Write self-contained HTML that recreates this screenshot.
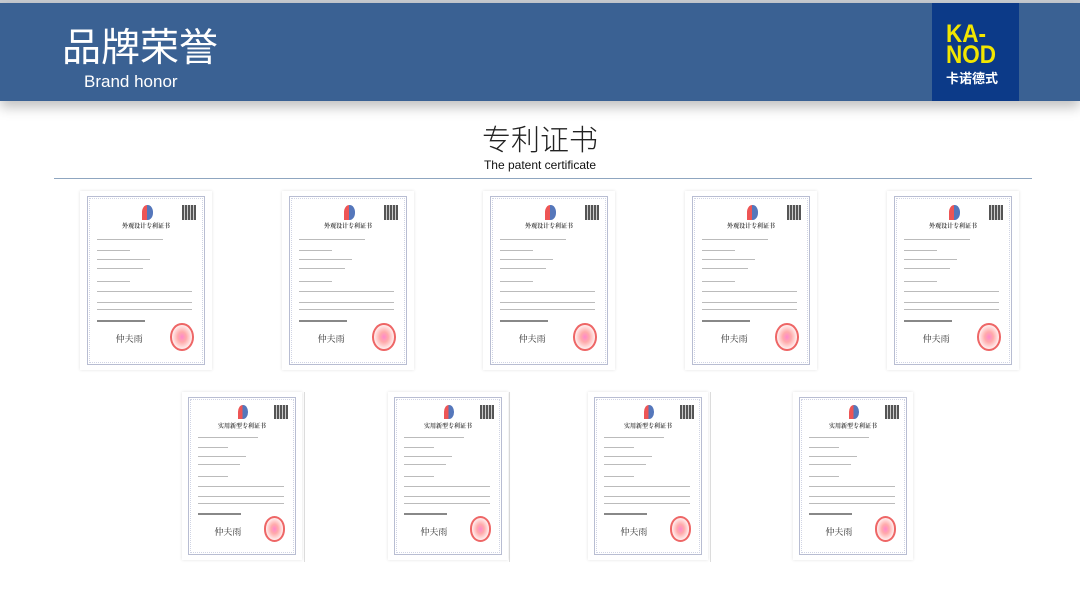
<!DOCTYPE html>
<html><head><meta charset="utf-8">
<style>
*{margin:0;padding:0;box-sizing:border-box}
body{width:1080px;height:608px;background:#fff;position:relative;overflow:hidden;font-family:"Liberation Sans","Noto Sans CJK SC",sans-serif}
.top{position:absolute;left:0;top:0;width:1080px;height:3px;background:#c8ccd2}
.hdr{position:absolute;left:0;top:3px;width:1080px;height:98px;background:#3a6193;box-shadow:0 6px 12px rgba(0,0,0,.25)}
.h1{position:absolute;left:62px;top:22px;color:#fff;font-size:39px;font-family:"Noto Sans CJK SC",sans-serif;letter-spacing:0px;line-height:46px}
.h2{position:absolute;left:84px;top:71px;color:#fff;font-size:17px;line-height:22px}
.logo{position:absolute;left:932px;top:3px;width:87px;height:98px;background:#0c3a88}
.logo .k{position:absolute;left:14px;top:21px;color:#f2e600;font-weight:bold;font-size:25px;line-height:21px;transform:scaleX(.9);transform-origin:left}
.logo .c{position:absolute;left:14px;top:65px;color:#fff;font-size:13px;font-family:"Noto Sans CJK SC",sans-serif;font-weight:bold}
.t1{position:absolute;left:0;width:1080px;top:118px;text-align:center;font-size:29px;font-family:"Noto Sans CJK SC",sans-serif;font-weight:300;color:#222;line-height:40px}
.t2{position:absolute;left:0;width:1080px;top:158px;text-align:center;font-size:12px;color:#111}
.rule{position:absolute;left:54px;top:178px;width:978px;height:1px;background:#8fa6c0}
.cert{position:absolute;background:#fff;box-shadow:0 0 3px rgba(0,0,0,.12)}
.cert .b{position:absolute;left:5%;top:3%;right:5%;bottom:3%;border:1px solid #b8bdd2;outline:1px dotted #d0d4e4;outline-offset:-3px}
.cert .lg{position:absolute;left:47%;top:8%;width:8%;height:8%;border-radius:50% 50% 50% 0;background:linear-gradient(90deg,#e55 0 45%,#57b 45%)}
.cert .qr{position:absolute;right:12%;top:8%;width:11%;height:8%;background:repeating-linear-gradient(90deg,#555 0 2px,#ccc 2px 3px)}
.cert .tt{position:absolute;left:0;right:0;top:17%;text-align:center;font-size:6px;font-family:"Noto Serif CJK SC",serif;color:#444;font-weight:bold}
.cert .ln{position:absolute;left:13%;height:1px;background:#bbb}
.cert .sl{position:absolute;right:14%;top:74%;width:18%;padding-bottom:18%;border-radius:50%;border:2px solid #e66;background:radial-gradient(#f8c 0,#faa 30%,#fee 70%)}
.cert .sg{position:absolute;left:27%;top:79%;font-size:9px;color:#333;font-family:"Noto Serif CJK SC",serif}
.cert .bar{position:absolute;left:13%;top:72%;width:36%;height:2px;background:#888}
.sep{position:absolute;width:1px;background:#ddd}
</style></head><body>
<div class="top"></div>
<div class="hdr"></div>
<div class="h1">品牌荣誉</div>
<div class="h2">Brand honor</div>
<div class="logo"><div class="k">KA-<br>NOD</div><div class="c">卡诺德式</div></div>
<div class="t1">专利证书</div>
<div class="t2">The patent certificate</div>
<div class="rule"></div>

<div class="cert" style="left:80px;top:191px;width:132px;height:179px"><div class="b"></div><div class="lg"></div><div class="qr"></div><div class="tt">外观设计专利证书</div><div class="ln" style="top:27%;width:50%"></div><div class="ln" style="top:33%;width:25%"></div><div class="ln" style="top:38%;width:40%"></div><div class="ln" style="top:43%;width:35%"></div><div class="ln" style="top:50%;width:25%"></div><div class="ln" style="top:56%;width:72%"></div><div class="ln" style="top:62%;width:72%"></div><div class="ln" style="top:66%;width:72%"></div><div class="bar"></div><div class="sg">仲夫雨</div><div class="sl"></div></div>
<div class="cert" style="left:282px;top:191px;width:132px;height:179px"><div class="b"></div><div class="lg"></div><div class="qr"></div><div class="tt">外观设计专利证书</div><div class="ln" style="top:27%;width:50%"></div><div class="ln" style="top:33%;width:25%"></div><div class="ln" style="top:38%;width:40%"></div><div class="ln" style="top:43%;width:35%"></div><div class="ln" style="top:50%;width:25%"></div><div class="ln" style="top:56%;width:72%"></div><div class="ln" style="top:62%;width:72%"></div><div class="ln" style="top:66%;width:72%"></div><div class="bar"></div><div class="sg">仲夫雨</div><div class="sl"></div></div>
<div class="cert" style="left:483px;top:191px;width:132px;height:179px"><div class="b"></div><div class="lg"></div><div class="qr"></div><div class="tt">外观设计专利证书</div><div class="ln" style="top:27%;width:50%"></div><div class="ln" style="top:33%;width:25%"></div><div class="ln" style="top:38%;width:40%"></div><div class="ln" style="top:43%;width:35%"></div><div class="ln" style="top:50%;width:25%"></div><div class="ln" style="top:56%;width:72%"></div><div class="ln" style="top:62%;width:72%"></div><div class="ln" style="top:66%;width:72%"></div><div class="bar"></div><div class="sg">仲夫雨</div><div class="sl"></div></div>
<div class="cert" style="left:685px;top:191px;width:132px;height:179px"><div class="b"></div><div class="lg"></div><div class="qr"></div><div class="tt">外观设计专利证书</div><div class="ln" style="top:27%;width:50%"></div><div class="ln" style="top:33%;width:25%"></div><div class="ln" style="top:38%;width:40%"></div><div class="ln" style="top:43%;width:35%"></div><div class="ln" style="top:50%;width:25%"></div><div class="ln" style="top:56%;width:72%"></div><div class="ln" style="top:62%;width:72%"></div><div class="ln" style="top:66%;width:72%"></div><div class="bar"></div><div class="sg">仲夫雨</div><div class="sl"></div></div>
<div class="cert" style="left:887px;top:191px;width:132px;height:179px"><div class="b"></div><div class="lg"></div><div class="qr"></div><div class="tt">外观设计专利证书</div><div class="ln" style="top:27%;width:50%"></div><div class="ln" style="top:33%;width:25%"></div><div class="ln" style="top:38%;width:40%"></div><div class="ln" style="top:43%;width:35%"></div><div class="ln" style="top:50%;width:25%"></div><div class="ln" style="top:56%;width:72%"></div><div class="ln" style="top:62%;width:72%"></div><div class="ln" style="top:66%;width:72%"></div><div class="bar"></div><div class="sg">仲夫雨</div><div class="sl"></div></div>

<div class="sep" style="left:304px;top:392px;height:170px"></div>
<div class="sep" style="left:509px;top:392px;height:170px"></div>
<div class="sep" style="left:710px;top:392px;height:170px"></div>

<div class="cert" style="left:182px;top:392px;width:120px;height:168px"><div class="b"></div><div class="lg"></div><div class="qr"></div><div class="tt">实用新型专利证书</div><div class="ln" style="top:27%;width:50%"></div><div class="ln" style="top:33%;width:25%"></div><div class="ln" style="top:38%;width:40%"></div><div class="ln" style="top:43%;width:35%"></div><div class="ln" style="top:50%;width:25%"></div><div class="ln" style="top:56%;width:72%"></div><div class="ln" style="top:62%;width:72%"></div><div class="ln" style="top:66%;width:72%"></div><div class="bar"></div><div class="sg">仲夫雨</div><div class="sl"></div></div>
<div class="cert" style="left:388px;top:392px;width:120px;height:168px"><div class="b"></div><div class="lg"></div><div class="qr"></div><div class="tt">实用新型专利证书</div><div class="ln" style="top:27%;width:50%"></div><div class="ln" style="top:33%;width:25%"></div><div class="ln" style="top:38%;width:40%"></div><div class="ln" style="top:43%;width:35%"></div><div class="ln" style="top:50%;width:25%"></div><div class="ln" style="top:56%;width:72%"></div><div class="ln" style="top:62%;width:72%"></div><div class="ln" style="top:66%;width:72%"></div><div class="bar"></div><div class="sg">仲夫雨</div><div class="sl"></div></div>
<div class="cert" style="left:588px;top:392px;width:120px;height:168px"><div class="b"></div><div class="lg"></div><div class="qr"></div><div class="tt">实用新型专利证书</div><div class="ln" style="top:27%;width:50%"></div><div class="ln" style="top:33%;width:25%"></div><div class="ln" style="top:38%;width:40%"></div><div class="ln" style="top:43%;width:35%"></div><div class="ln" style="top:50%;width:25%"></div><div class="ln" style="top:56%;width:72%"></div><div class="ln" style="top:62%;width:72%"></div><div class="ln" style="top:66%;width:72%"></div><div class="bar"></div><div class="sg">仲夫雨</div><div class="sl"></div></div>
<div class="cert" style="left:793px;top:392px;width:120px;height:168px"><div class="b"></div><div class="lg"></div><div class="qr"></div><div class="tt">实用新型专利证书</div><div class="ln" style="top:27%;width:50%"></div><div class="ln" style="top:33%;width:25%"></div><div class="ln" style="top:38%;width:40%"></div><div class="ln" style="top:43%;width:35%"></div><div class="ln" style="top:50%;width:25%"></div><div class="ln" style="top:56%;width:72%"></div><div class="ln" style="top:62%;width:72%"></div><div class="ln" style="top:66%;width:72%"></div><div class="bar"></div><div class="sg">仲夫雨</div><div class="sl"></div></div>
</body></html>
